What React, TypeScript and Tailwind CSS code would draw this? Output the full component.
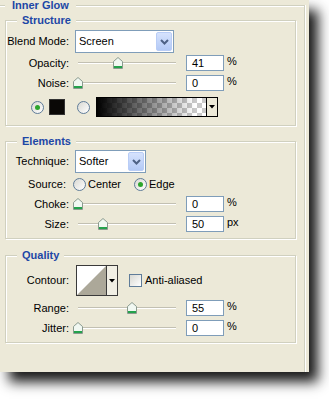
import React from "react";

const LABEL = "w-[63px] shrink-0 text-right";
const GROUP =
  "w-[291px] border border-[#d0d0bf] shadow-[1px_1px_0_#fff,inset_1px_1px_0_#fff]";
const TITLE = "-mt-[7px] w-fit bg-[#ece9d8] font-bold text-[#1d47a6]";

function Chevron() {
  return (
    <svg width="9" height="6" viewBox="0 0 9 6">
      <polyline points="1,1 4.5,4.5 8,1" fill="none" stroke="#4d6185" strokeWidth="2" />
    </svg>
  );
}

function Select({ value, className }: { value: string; className: string }) {
  return (
    <div className={`ml-[6px] flex h-[23px] items-center border border-[#7f9db9] bg-white ${className}`}>
      <span className="flex-1 pl-[3px]">{value}</span>
      <div className="mr-px flex h-[19px] w-[16px] items-center justify-center rounded-[2px] border border-[#b9cdf6] bg-[linear-gradient(#d6e3fd,#b3c9f6)]">
        <Chevron />
      </div>
    </div>
  );
}

function Thumb() {
  return (
    <svg width="10" height="12" viewBox="0 0 10 12">
      <path d="M0.5 4.5 L5 0.5 L9.5 4.5 V11.5 H0.5 Z" fill="#f1f8f2" stroke="#8a9a8e" />
      <rect x="1" y="9" width="8" height="2" fill="#24a24c" />
    </svg>
  );
}

function Slider({ pct }: { pct: number }) {
  return (
    <div className="relative ml-[6px] h-[16px] w-[104px] shrink-0">
      <div className="absolute left-[3px] right-[3px] top-[7px] h-[2px] border-t border-b border-t-[#c2c0b2] border-b-white" />
      <div className="absolute top-[2px]" style={{ left: 3 + pct * 98 - 5 }}>
        <Thumb />
      </div>
    </div>
  );
}

function SliderRow({ label, pct, value, unit }: { label: string; pct: number; value: string; unit: string }) {
  return (
    <div className="mt-[4px] flex h-[16px] items-center">
      <span className={LABEL}>{label}</span>
      <Slider pct={pct} />
      <div className="ml-[7px] h-[16px] w-[38px] border border-[#7f9db9] bg-white pl-[5px] leading-[14px]">
        {value}
      </div>
      <span className="ml-[3px] self-start">{unit}</span>
    </div>
  );
}

function Radio({ on }: { on?: boolean }) {
  return (
    <span className="flex h-[13px] w-[13px] shrink-0 items-center justify-center rounded-full border border-[#5f7c99] bg-[linear-gradient(135deg,#d8d8d2,#fff)]">
      {on && <span className="h-[5px] w-[5px] rounded-full bg-[#2ca52c]" />}
    </span>
  );
}

export default function App() {
  return (
    <div className="h-[399px] w-[329px] overflow-hidden bg-white font-['Liberation_Sans',Arial,sans-serif] text-[11px] leading-[13px] text-black">
      <div className="h-[372px] w-[309px] bg-[#ece9d8] pt-[5px] shadow-[9px_10px_12px_rgba(0,0,0,0.9)]">
        <div className="h-[367px] w-[305px] border-r border-t border-[#d0d0bf] shadow-[1px_0_0_#fff,inset_0_1px_0_#fff]">
          <div className={`${TITLE} ml-[5px] px-[7px]`}>Inner Glow</div>

          <div className="pl-[5px]">
            {/* Structure */}
            <div className={`${GROUP} mt-[8px] h-[106px]`}>
              <div className={`${TITLE} ml-[11px] px-[5px]`}>Structure</div>
              <div className="mt-[3px] flex items-center">
                <span className={LABEL}>Blend Mode:</span>
                <Select value="Screen" className="w-[99px]" />
              </div>
              <div className="-mt-[2px]">
                <SliderRow label="Opacity:" pct={0.41} value="41" unit="%" />
              </div>
              <SliderRow label="Noise:" pct={0} value="0" unit="%" />
              <div className="mt-[6px] flex h-[20px] items-center pl-[25px]">
                <Radio on />
                <span className="ml-[5px] h-[16px] w-[16px] border border-[#333] bg-[#0a0806]" />
                <span className="ml-[12px]">
                  <Radio />
                </span>
                <div className="ml-[6px] flex h-[20px] w-[122px] border border-black">
                  <div className="flex-1 [background-image:linear-gradient(to_right,#000,rgba(0,0,0,0)_90%),repeating-conic-gradient(#c9c9c9_0%_25%,#fff_0%_50%)] [background-size:100%_100%,10px_10px]" />
                  <div className="flex w-[11px] items-center justify-center border-l border-black bg-[#ece9d8]">
                    <svg width="6" height="4" viewBox="0 0 6 4">
                      <polygon points="0,0 6,0 3,3.5" fill="#000" />
                    </svg>
                  </div>
                </div>
              </div>
            </div>

            {/* Elements */}
            <div className={`${GROUP} mt-[15px] h-[98px]`}>
              <div className={`${TITLE} ml-[11px] px-[5px]`}>Elements</div>
              <div className="mt-[2px] flex items-center">
                <span className={LABEL}>Technique:</span>
                <Select value="Softer" className="w-[71px]" />
              </div>
              <div className="mt-[4px] flex h-[15px] items-center">
                <span className="w-[60px] shrink-0 text-right">Source:</span>
                <div className="ml-[7px] flex w-[61px] items-center">
                  <Radio />
                  <span className="ml-[2px]">Center</span>
                </div>
                <Radio on />
                <span className="ml-[2px]">Edge</span>
              </div>
              <SliderRow label="Choke:" pct={0} value="0" unit="%" />
              <SliderRow label="Size:" pct={0.25} value="50" unit="px" />
            </div>

            {/* Quality */}
            <div className={`${GROUP} mt-[16px] h-[88px]`}>
              <div className={`${TITLE} ml-[11px] px-[5px]`}>Quality</div>
              <div className="mt-[3px] flex h-[31px] items-center">
                <span className={LABEL}>Contour:</span>
                <div className="ml-[7px] flex h-[31px] w-[42px] border border-[#3a3a3a]">
                  <svg width="29" height="29" viewBox="0 0 29 29" className="bg-white">
                    <polygon points="0,29 29,0 29,29" fill="#aca899" />
                  </svg>
                  <div className="flex flex-1 items-center justify-center border-l border-[#3a3a3a] bg-[#f1efe4]">
                    <svg width="6" height="4" viewBox="0 0 6 4">
                      <polygon points="0,0 6,0 3,3.5" fill="#000" />
                    </svg>
                  </div>
                </div>
                <span className="ml-[11px] h-[13px] w-[13px] border border-[#5f7c99] bg-[linear-gradient(135deg,#d8d8d2,#fff)]" />
                <span className="ml-[3px]">Anti-aliased</span>
              </div>
              <SliderRow label="Range:" pct={0.55} value="55" unit="%" />
              <SliderRow label="Jitter:" pct={0} value="0" unit="%" />
            </div>
          </div>
        </div>
      </div>
    </div>
  );
}
